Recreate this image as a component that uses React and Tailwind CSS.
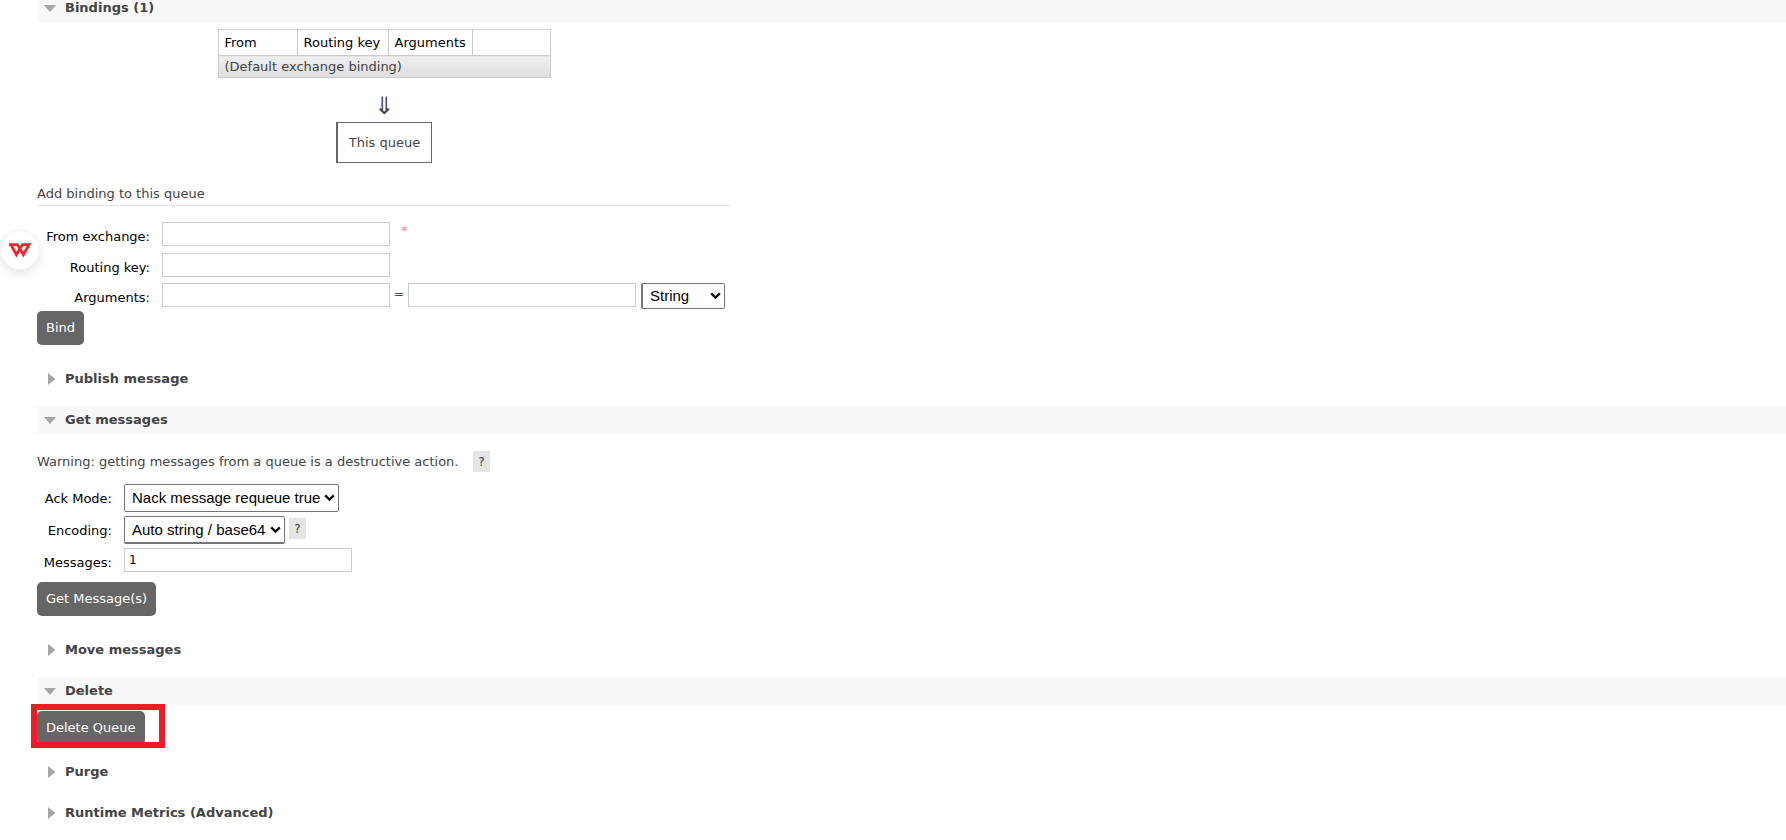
import React from "react";

function Section({ title, open = false, children, className = "" }) {
  return (
    <section className={className}>
      <h2
        className={
          open
            ? "flex h-7 items-center bg-[#f8f8f8] text-[13px] font-bold text-[#444]"
            : "flex h-7 items-center text-[13px] font-bold text-[#444]"
        }
      >
        <button type="button" aria-expanded={open} className="flex items-center">
          <span className="flex w-7 items-center justify-start pl-[7px]">
            {open ? (
              <svg width="12" height="7" viewBox="0 0 12 7" aria-hidden="true">
                <path d="M0 0h12L6 7z" fill="#a6a6a6" />
              </svg>
            ) : (
              <svg width="12" height="12" viewBox="0 0 12 12" aria-hidden="true">
                <path d="M4 0v12l7.500-6z" fill="#a6a6a6" />
              </svg>
            )}
          </span>
          <span>{title}</span>
        </button>
      </h2>
      {children}
    </section>
  );
}

function TextInput(props) {
  return (
    <input
      type="text"
      className="h-6 w-[228px] border border-[#ccc] bg-white px-1 text-[12px] text-black"
      {...props}
    />
  );
}

function Select({ options, className, ...rest }) {
  return (
    <span className="relative inline-flex">
      <select
        className={
          "appearance-none rounded-[2px] border border-[#767676] bg-white pl-[7px] pr-4 font-['Liberation_Sans',Arial,sans-serif] text-[15px] leading-5 text-black " +
          className
        }
        {...rest}
      >
        {options.map((o) => (
          <option key={o}>{o}</option>
        ))}
      </select>
      <svg
        className="pointer-events-none absolute right-1 top-1/2 -translate-y-1/2"
        width="11"
        height="8"
        viewBox="0 0 11 8"
        aria-hidden="true"
      >
        <path d="M1.2 1.4l4.3 4.2 4.3-4.2" fill="none" stroke="#111" strokeWidth="2.4" />
      </svg>
    </span>
  );
}

function ActionButton({ children }) {
  return (
    <button
      type="submit"
      className="block h-[34px] rounded-[5px] bg-[#666] px-[9px] text-[13px] text-white"
    >
      {children}
    </button>
  );
}

function Help({ label }) {
  return (
    <button
      type="button"
      aria-label={label}
      className="flex h-[21px] w-[17px] items-center justify-center bg-[#e4e4e4] text-[12px] text-[#444]"
    >
      ?
    </button>
  );
}

function Label({ htmlFor, children, className }) {
  return (
    <label htmlFor={htmlFor} className={"pt-[6px] text-right text-black " + className}>
      {children}
    </label>
  );
}

const prevent = (e) => e.preventDefault();

export default function App() {
  return (
    <div className="overflow-hidden bg-white font-['DejaVu_Sans',Verdana,sans-serif] text-[13px] leading-[18px] text-[#444]">
      <main className="flex flex-col gap-[13px] pl-[37px] pb-3">
        <Section title="Bindings (1)" open className="-mt-[6px]">
          <div className="flex w-[694px] flex-col items-center pt-[7px]">
            <table className="w-[332px] table-fixed border-collapse text-left">
              <colgroup>
                <col className="w-[79px]" />
                <col className="w-[91px]" />
                <col className="w-[84px]" />
                <col className="w-[78px]" />
              </colgroup>
              <thead>
                <tr className="h-[26px] whitespace-nowrap text-black">
                  <th className="border border-[#ccc] pl-[6px] font-normal">From</th>
                  <th className="border border-[#ccc] pl-[6px] font-normal">Routing key</th>
                  <th className="border border-[#ccc] pl-[6px] font-normal">Arguments</th>
                  <td className="border border-[#ccc]" />
                </tr>
              </thead>
              <tbody>
                <tr className="h-[22px]">
                  <td
                    colSpan={4}
                    className="border border-[#ccc] bg-linear-to-b from-[#f0f0f0] to-[#dddddd] pl-[6px]"
                  >
                    (Default exchange binding)
                  </td>
                </tr>
              </tbody>
            </table>
            <p className="mt-4 h-7 text-[24px] leading-6">⇓</p>
            <p className="flex h-[41px] items-center border border-l-2 border-[#666] px-[11px]">
              This queue
            </p>
          </div>

          <form onSubmit={prevent} className="mt-[22px] mb-[7px] w-[694px]">
            <h3 className="border-b border-[#e4e4e4] pb-[2px]">Add binding to this queue</h3>
            <div className="mt-4 flex flex-col gap-[7px]">
              <div className="flex">
                <Label htmlFor="source" className="w-[113px]">From exchange:</Label>
                <div className="flex pl-3">
                  <TextInput id="source" />
                  <span className="pl-[11px] text-[#f88]">*</span>
                </div>
              </div>
              <div className="flex">
                <Label htmlFor="key" className="w-[113px]">Routing key:</Label>
                <div className="pl-3">
                  <TextInput id="key" />
                </div>
              </div>
              <div className="-mt-px flex">
                <Label htmlFor="arg-key" className="w-[113px]">Arguments:</Label>
                <div className="flex pl-3">
                  <TextInput id="arg-key" />
                  <span className="w-[18px] pt-[2px] text-center text-[12px]">=</span>
                  <TextInput aria-label="Argument value" />
                  <span className="flex pl-[5px]">
                    <Select
                      aria-label="Argument type"
                      className="h-[26px] w-[84px] border-l-2"
                      options={["String", "Number", "Boolean", "List"]}
                    />
                  </span>
                </div>
              </div>
            </div>
            <div className="pt-[2px]">
              <ActionButton>Bind</ActionButton>
            </div>
          </form>
        </Section>

        <Section title="Publish message" />

        <Section title="Get messages" open>
          <form onSubmit={prevent} className="mb-[7px]">
            <p className="mt-[17px] flex items-center gap-[5px]">
              <span className="min-w-[431px]">
                Warning: getting messages from a queue is a destructive action.
              </span>
              <Help label="About getting messages" />
            </p>
            <div className="mt-3 flex flex-col gap-1">
              <div className="flex">
                <Label htmlFor="ackmode" className="w-[75px]">Ack Mode:</Label>
                <div className="flex pl-3">
                  <Select
                    id="ackmode"
                    className="h-7 w-[215px]"
                    options={["Nack message requeue true", "Automatic ack", "Reject requeue true", "Reject requeue false"]}
                  />
                </div>
              </div>
              <div className="flex">
                <Label htmlFor="encoding" className="w-[75px]">Encoding:</Label>
                <div className="flex items-start gap-1 pl-3">
                  <Select
                    id="encoding"
                    className="h-7 w-[161px] border-b-2"
                    options={["Auto string / base64", "base64"]}
                  />
                  <span className="flex pt-[2px]">
                    <Help label="About encoding" />
                  </span>
                </div>
              </div>
              <div className="flex">
                <Label htmlFor="count" className="w-[75px]">Messages:</Label>
                <div className="pl-3">
                  <TextInput id="count" defaultValue="1" />
                </div>
              </div>
            </div>
            <div className="pt-[10px]">
              <ActionButton>Get Message(s)</ActionButton>
            </div>
          </form>
        </Section>

        <Section title="Move messages" />

        <Section title="Delete" open>
          <form onSubmit={prevent} className="relative pt-[6px]">
            <ActionButton>Delete Queue</ActionButton>
            <span
              aria-hidden="true"
              className="pointer-events-none absolute -left-[6px] -top-px h-11 w-[134px] border-6 border-[#ed1c24]"
            />
          </form>
        </Section>

        <Section title="Purge" />
        <Section title="Runtime Metrics (Advanced)" />
      </main>

      <button
        type="button"
        aria-label="WPS"
        className="fixed left-0 top-[230px] flex size-10 items-center justify-center rounded-full border border-[#f2f2f2] bg-white shadow-[0_4px_10px_rgba(0,0,0,0.1)]"
      >
        <svg width="22" height="15" viewBox="0 0 22 15" aria-hidden="true">
          <g fill="none" stroke="#f5222d" strokeWidth="2.8" strokeLinejoin="miter">
            <path d="M0 1.6h8.400l6 10L20 1.600h-6.500L7.400 11.600 1.900 1.600" />
          </g>
        </svg>
      </button>
    </div>
  );
}
